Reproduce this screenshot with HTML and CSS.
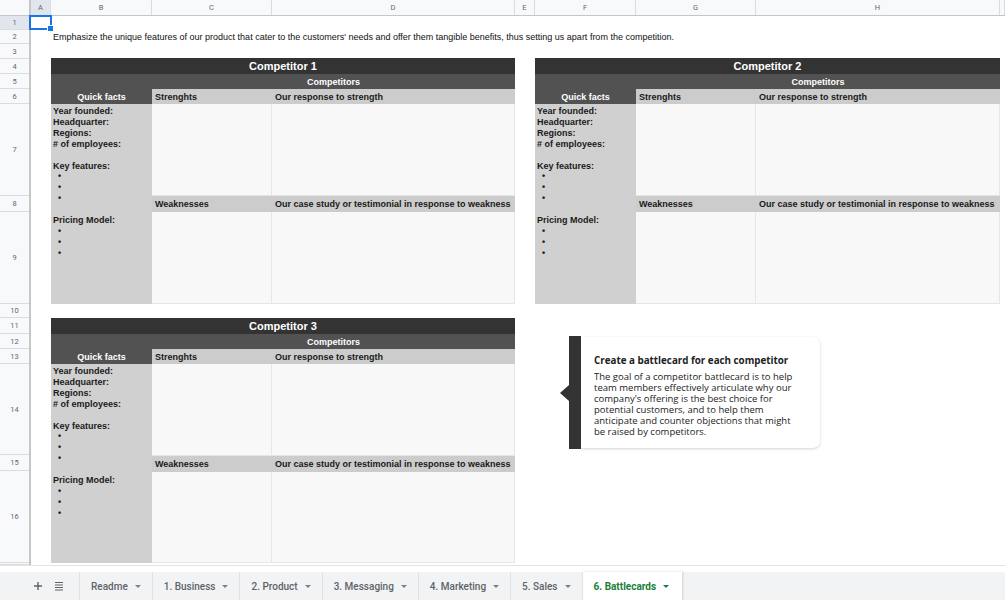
FILE: index.html
```html
<!doctype html>
<html>
<head>
<meta charset="utf-8">
<title>6. Battlecards</title>
  <link rel="stylesheet" href="styles.css">
</head>
<body>
  <div class="sheet">
    <!-- column headers -->
    <div class="colhdr">
      <div class="corner"></div>
      <div class="col">A</div>
      <div class="col">B</div>
      <div class="col">C</div>
      <div class="col">D</div>
      <div class="col">E</div>
      <div class="col">F</div>
      <div class="col">G</div>
      <div class="col">H</div>
      <div class="col"></div>
    </div>

    <div class="body">
      <!-- row numbers -->
      <div class="rowhdr">
        <div class="num">1</div>
        <div class="num">2</div>
        <div class="num">3</div>
        <div class="num">4</div>
        <div class="num">5</div>
        <div class="num">6</div>
        <div class="num">7</div>
        <div class="num">8</div>
        <div class="num">9</div>
        <div class="num">10</div>
        <div class="num">11</div>
        <div class="num">12</div>
        <div class="num">13</div>
        <div class="num">14</div>
        <div class="num">15</div>
        <div class="num">16</div>
        <div class="num"></div>
      </div>

      <div class="cells">
        <div class="selected"></div>
        <div class="intro">Emphasize the unique features of our product that cater to the customers' needs and offer them tangible benefits, thus setting us apart from the competition.</div>

        <div class="card pos-1">
          <div class="c-title">Competitor 1</div>
          <div class="c-qf">Quick facts</div>
          <div class="c-comp">Competitors</div>
          <div class="c-sub">Strenghts</div>
          <div class="c-sub">Our response to strength</div>
          <div class="c-facts">
            <p>Year founded:</p>
            <p>Headquarter:</p>
            <p>Regions:</p>
            <p># of employees:</p>
            <p>&nbsp;</p>
            <p>Key features:</p>
            <p class="dot">•</p>
            <p class="dot">•</p>
            <p class="dot">•</p>
            <p>&nbsp;</p>
            <p>Pricing Model:</p>
            <p class="dot">•</p>
            <p class="dot">•</p>
            <p class="dot">•</p>
          </div>
          <div class="c-empty"></div>
          <div class="c-empty"></div>
          <div class="c-sub">Weaknesses</div>
          <div class="c-sub">Our case study or testimonial in response to weakness</div>
          <div class="c-empty"></div>
          <div class="c-empty"></div>
        </div>

        <div class="card pos-2">
          <div class="c-title">Competitor 2</div>
          <div class="c-qf">Quick facts</div>
          <div class="c-comp">Competitors</div>
          <div class="c-sub">Strenghts</div>
          <div class="c-sub">Our response to strength</div>
          <div class="c-facts">
            <p>Year founded:</p>
            <p>Headquarter:</p>
            <p>Regions:</p>
            <p># of employees:</p>
            <p>&nbsp;</p>
            <p>Key features:</p>
            <p class="dot">•</p>
            <p class="dot">•</p>
            <p class="dot">•</p>
            <p>&nbsp;</p>
            <p>Pricing Model:</p>
            <p class="dot">•</p>
            <p class="dot">•</p>
            <p class="dot">•</p>
          </div>
          <div class="c-empty"></div>
          <div class="c-empty"></div>
          <div class="c-sub">Weaknesses</div>
          <div class="c-sub">Our case study or testimonial in response to weakness</div>
          <div class="c-empty"></div>
          <div class="c-empty"></div>
        </div>

        <div class="card pos-3">
          <div class="c-title">Competitor 3</div>
          <div class="c-qf">Quick facts</div>
          <div class="c-comp">Competitors</div>
          <div class="c-sub">Strenghts</div>
          <div class="c-sub">Our response to strength</div>
          <div class="c-facts">
            <p>Year founded:</p>
            <p>Headquarter:</p>
            <p>Regions:</p>
            <p># of employees:</p>
            <p>&nbsp;</p>
            <p>Key features:</p>
            <p class="dot">•</p>
            <p class="dot">•</p>
            <p class="dot">•</p>
            <p>&nbsp;</p>
            <p>Pricing Model:</p>
            <p class="dot">•</p>
            <p class="dot">•</p>
            <p class="dot">•</p>
          </div>
          <div class="c-empty"></div>
          <div class="c-empty"></div>
          <div class="c-sub">Weaknesses</div>
          <div class="c-sub">Our case study or testimonial in response to weakness</div>
          <div class="c-empty"></div>
          <div class="c-empty"></div>
        </div>

        <!-- floating note drawing -->
        <div class="note">
          <div class="note-bar"></div>
          <div class="note-card">
            <h3>Create a battlecard for each competitor</h3>
            <p>The goal of a competitor battlecard is to help team members effectively articulate why our company's offering is the best choice for potential customers, and to help them anticipate and counter objections that might be raised by competitors.</p>
          </div>
        </div>
      </div>
    </div>
  </div>

  <div class="hscroll"></div>

  <div class="tabbar">
    <div class="tool">
      <svg width="10" height="10" viewBox="0 0 10 10"><path d="M5 1v8M1 5h8" stroke="#5f6368" stroke-width="1.4"/></svg>
    </div>
    <div class="tool">
      <svg width="10" height="10" viewBox="0 0 10 10"><path d="M1 1.5h8M1 4h8M1 6.5h8M1 9h8" stroke="#5f6368" stroke-width="1.2"/></svg>
    </div>
    <div class="tab">Readme <span class="caret"></span></div>
    <div class="tab">1. Business <span class="caret"></span></div>
    <div class="tab">2. Product <span class="caret"></span></div>
    <div class="tab">3. Messaging <span class="caret"></span></div>
    <div class="tab">4. Marketing <span class="caret"></span></div>
    <div class="tab">5. Sales <span class="caret"></span></div>
    <div class="tab active">6. Battlecards <span class="caret"></span></div>
  </div>
</body>
</html>
```

FILE: styles.css
```css
:root {
  --cols: 20px 101px 120px 243px 20px 101px 120px 244px 1fr;
  --rows: 14px 14px 15px 15px 15px 15px 92px 16px 92px 14px 16px 15px 15px 91px 16px 92px 2px;
}
body {
  margin: 0;
  width: 1005px;
  height: 600px;
  overflow: hidden;
  font-family: 'Liberation Sans', Arial, sans-serif;
  background: #fff;
}

/* ---- sheet ---- */
.sheet {
  height: 565px;
  overflow: hidden;
}
.colhdr {
  display: grid;
  grid-template-columns: 31px var(--cols);
  height: 16px;
  background: #f8f9fa;
  border-bottom: 1px solid #c4c7c5;
  box-sizing: border-box;
}
.corner {
  border-right: 2px solid #c4c7c5;
}
.col {
  border-right: 1px solid #dadce0;
  font-family: Roboto, sans-serif;
  font-size: 7.5px;
  color: #666;
  text-align: center;
  line-height: 15px;
}
.col:nth-child(2) {
  background: #e1e6ee;
}

.body {
  display: flex;
}
.rowhdr {
  width: 31px;
  flex: none;
  display: grid;
  grid-template-rows: var(--rows);
  background: #f8f9fa;
  border-right: 2px solid #c4c7c5;
  box-sizing: border-box;
}
.num {
  border-bottom: 1px solid #dadce0;
  font-family: Roboto, sans-serif;
  font-size: 7.5px;
  color: #666;
  display: flex;
  align-items: center;
  justify-content: center;
}
.num:first-child {
  background: #e1e6ee;
}

.cells {
  flex: 1;
  display: grid;
  grid-template-columns: var(--cols);
  grid-template-rows: var(--rows);
}
.selected {
  grid-row: 1;
  grid-column: 1;
  border: 2px solid #1a73e8;
  margin: -1px -1px 0 -2px;
  position: relative;
}
.selected::after {
  content: '';
  position: absolute;
  right: -4px;
  bottom: -4px;
  width: 5px;
  height: 5px;
  background: #1a73e8;
  border: 1px solid #fff;
}
.intro {
  grid-row: 2;
  grid-column: 2 / -1;
  font-size: 9px;
  color: #111;
  padding-left: 2px;
  white-space: nowrap;
  display: flex;
  align-items: center;
}

/* ---- competitor cards ---- */
.card {
  display: grid;
  grid-template-columns: 101px 120px 1fr;
  grid-template-rows: 16px 15px 15px 1fr 16px 1fr;
  font-size: 9px;
  font-weight: bold;
  color: #1a1a1a;
}
.pos-1 {
  grid-row: 4 / 10;
  grid-column: 2 / 5;
}
.pos-2 {
  grid-row: 4 / 10;
  grid-column: 6 / 9;
}
.pos-3 {
  grid-row: 11 / 17;
  grid-column: 2 / 5;
}
.pos-1, .pos-2 {
  margin-top: -1px;
}
.c-title {
  grid-column: span 3;
  background: #333;
  color: #fff;
  font-size: 11px;
  display: flex;
  align-items: center;
  justify-content: center;
}
.c-qf {
  grid-row: span 2;
  background: #525252;
  color: #fff;
  display: flex;
  align-items: flex-end;
  justify-content: center;
  padding-bottom: 2px;
}
.c-comp {
  grid-column: span 2;
  background: #525252;
  color: #fff;
  display: flex;
  align-items: center;
  justify-content: center;
}
.c-sub {
  background: #cccccc;
  padding-left: 3px;
  display: flex;
  align-items: center;
  white-space: nowrap;
}
.c-facts {
  grid-row: span 3;
  background: #d0d0d0;
  padding: 2px 2px;
}
.c-facts p {
  margin: 0;
  line-height: 10.9px;
}
.c-facts .dot {
  padding-left: 5px;
}
.c-empty {
  background: #f8f8f8;
  border-right: 1px solid #e6e6e6;
  border-bottom: 1px solid #e6e6e6;
}

/* ---- note drawing ---- */
.note {
  grid-row: 11 / 17;
  grid-column: 6 / 9;
  align-self: start;
  margin: 18px 0 0 34px;
  width: 251px;
  height: 113px;
  display: flex;
}
.note-bar {
  width: 12px;
  background: #333;
  position: relative;
}
.note-bar::before {
  content: '';
  position: absolute;
  left: -9px;
  top: 49px;
  border-top: 8px solid transparent;
  border-bottom: 8px solid transparent;
  border-right: 9px solid #333;
}
.note-card {
  flex: 1;
  margin: 1px 0;
  background: #fff;
  border-radius: 0 7px 7px 0;
  box-shadow: 0 1px 3px rgba(0, 0, 0, .18);
  padding: 17px 17px 0 13px;
  font-family: 'Open Sans', Lato, sans-serif;
  color: #222;
}
.note-card h3 {
  margin: 0 0 4px;
  font-size: 9.8px;
  font-weight: bold;
  white-space: nowrap;
}
.note-card p {
  margin: 0;
  font-size: 9.5px;
  line-height: 11px;
}

/* ---- bottom tabs ---- */
.hscroll {
  height: 7px;
  border-top: 1px solid #e3e3e3;
  box-sizing: border-box;
}
.tabbar {
  height: 28px;
  background: #f1f3f4;
  display: flex;
  align-items: stretch;
  padding-left: 27px;
  font-family: Roboto, Arial, sans-serif;
  font-size: 10px;
  font-weight: 500;
  color: #5f6368;
}
.tool {
  width: 21px;
  display: flex;
  align-items: center;
  justify-content: center;
}
.tool + .tool {
  margin-right: 10px;
}
.tab {
  display: flex;
  align-items: center;
  gap: 7px;
  padding: 0 11px;
  border-left: 1px solid #e0e2e4;
}
.caret {
  border-left: 3px solid transparent;
  border-right: 3px solid transparent;
  border-top: 3px solid #7d8185;
}
.tab.active {
  background: #fff;
  color: #188038;
  font-weight: bold;
  padding-right: 13px;
  box-shadow: 1px 0 2px rgba(0, 0, 0, .15);
}
.tab.active .caret {
  border-top-color: #188038;
}
```
